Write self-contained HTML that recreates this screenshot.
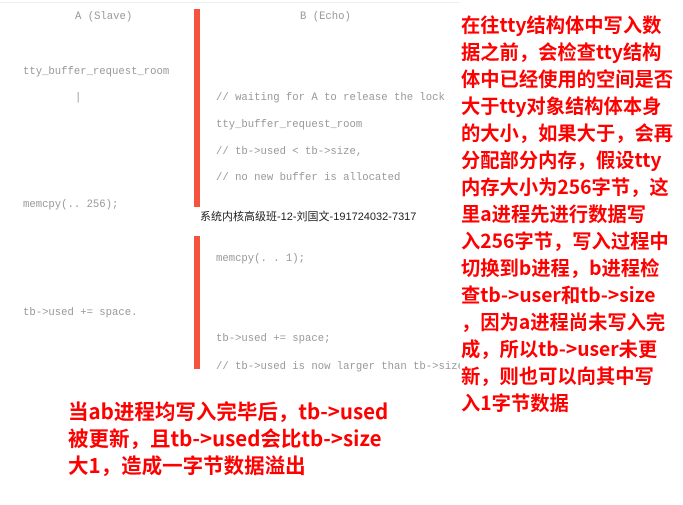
<!DOCTYPE html>
<html><head><meta charset="utf-8"><style>
body{margin:0;width:683px;height:505px;background:#fff;position:relative;overflow:hidden}
.c{position:absolute;font-family:"Liberation Mono",monospace;font-size:10.6px;color:#999;white-space:pre;line-height:12px}
.r{position:absolute;font-family:"Noto Sans CJK SC","Liberation Sans",sans-serif;font-weight:bold;color:#f00;font-size:19.3px;line-height:27px;white-space:nowrap}
.bar{position:absolute;left:194px;width:6px;background:#f5533d}
</style></head><body>
<div style="position:absolute;left:0;top:2px;width:460px;height:1px;background:#eee"></div>
<div class="bar" style="top:9px;height:198px"></div>
<div class="bar" style="top:236px;height:133px"></div>
<div class="c" style="left:75px;top:11px">A (Slave)</div>
<div class="c" style="left:300px;top:11px">B (Echo)</div>
<div class="c" style="left:23px;top:66px">tty_buffer_request_room</div>
<div class="c" style="left:75px;top:92px">|</div>
<div class="c" style="left:23px;top:199px">memcpy(.. 256);</div>
<div class="c" style="left:23px;top:307px">tb-&gt;used += space.</div>
<div class="c" style="left:216px;top:92px">// waiting for A to release the lock</div>
<div class="c" style="left:216px;top:119px">tty_buffer_request_room</div>
<div class="c" style="left:216px;top:146px">// tb-&gt;used &lt; tb-&gt;size,</div>
<div class="c" style="left:216px;top:172px">// no new buffer is allocated</div>
<div class="c" style="left:216px;top:253px">memcpy(. . 1);</div>
<div class="c" style="left:216px;top:333px">tb-&gt;used += space;</div>
<div class="c" style="left:216px;top:361px;width:244px;overflow:hidden">// tb-&gt;used is now larger than tb-&gt;size</div>
<div style="position:absolute;left:200px;top:208px;font-family:'Liberation Sans','Noto Sans CJK SC',sans-serif;font-size:11px;color:#222;white-space:nowrap">系统内核高级班-12-刘国文-191724032-7317</div>
<div class="r" style="left:461px;top:11px">在往tty结构体中写入数<br>据之前，会检查tty结构<br>体中已经使用的空间是否<br>大于tty对象结构体本身<br>的大小，如果大于，会再<br>分配部分内存，假设tty<br>内存大小为256字节，这<br>里a进程先进行数据写<br>入256字节，写入过程中<br>切换到b进程，b进程检<br>查tb-&gt;user和tb-&gt;size<br>，因为a进程尚未写入完<br>成，所以tb-&gt;user未更<br>新，则也可以向其中写<br>入1字节数据</div>
<div class="r" style="left:68px;top:397px;line-height:27px;font-size:20.5px">当ab进程均写入完毕后，tb-&gt;used<br>被更新，且tb-&gt;used会比tb-&gt;size<br>大1，造成一字节数据溢出</div>
</body></html>
